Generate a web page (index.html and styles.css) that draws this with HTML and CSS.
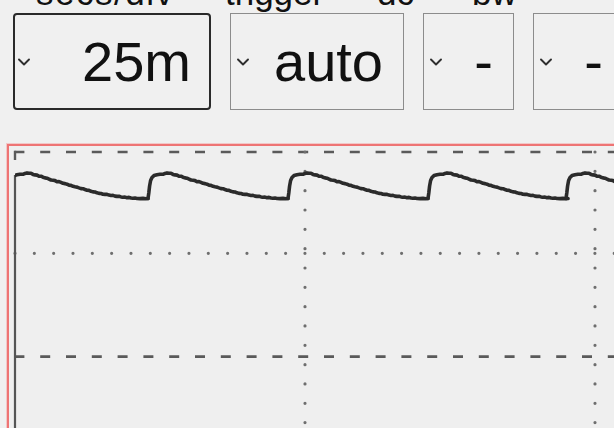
FILE: index.html
```html
<!DOCTYPE html>
<html>
<head>
<meta charset="utf-8">
<link rel="stylesheet" href="styles.css">
</head>
<body>
<div class="labels">
  <span class="lab lab-1">secs/div</span>
  <span class="lab lab-2">trigger</span>
  <span class="lab lab-3">dc</span>
  <span class="lab lab-4">bw</span>
</div>
<div class="controls">
  <div class="sel sel-active w-wide">
    <svg class="chev" width="12" height="8" viewBox="0 0 12 8"><polyline points="1,1.5 6,6.5 11,1.5"/></svg>
    <span class="val">25m</span>
  </div>
  <div class="sel w-mid">
    <svg class="chev" width="12" height="8" viewBox="0 0 12 8"><polyline points="1,1.5 6,6.5 11,1.5"/></svg>
    <span class="val">auto</span>
  </div>
  <div class="sel w-small">
    <svg class="chev" width="12" height="8" viewBox="0 0 12 8"><polyline points="1,1.5 6,6.5 11,1.5"/></svg>
    <span class="val">-</span>
  </div>
  <div class="sel w-small">
    <svg class="chev" width="12" height="8" viewBox="0 0 12 8"><polyline points="1,1.5 6,6.5 11,1.5"/></svg>
    <span class="val">-</span>
  </div>
</div>
<div class="plot">
  <svg class="scope" width="640" height="300" viewBox="9 146 640 300">
    <defs>
      <polyline id="period" points="0,198.5 0.8,193 1.6,186 2.6,180.5 4,177.5 6,175.6 9,174.8 12,174.2 15,174.3 17,173.4 19,172.9 21,173.3 23,173.2 25,174.4 27,174.9 29,175.1 31,176.3 33,176.2 35,177.2 37,177.9 39,178.2 41,179.1 43,180 45,180.2 47,180.6 49,181.8 51,181.6 53,182.4 55,183.3 57,183.6 59,184.2 61,185.2 63,185.4 65,186.3 67,186.8 69,187.1 71,187.9 73,188.6 75,188.7 77,189.5 79,190.2 81,190.4 83,191.3 85,191.9 87,192 89,192.8 91,193.4 93,193.5 95,194.2 97,194.4 99,194.3 101,195.1 103,195.5 105,195.4 107,196.1 109,196.4 111,196.3 113,196.9 115,197.3 117,197.1 119,197.7 121,197.4 123,198 125,198.3 127,198.1 129,198.5 132,198.6 135,198.4 138,198.7 140,198.5"/>
      <clipPath id="grid-clip"><rect x="15" y="140" width="640" height="320"/></clipPath>
    </defs>
    <g class="dash">
      <line x1="14.4" y1="152" x2="650" y2="152"/>
      <line x1="14.4" y1="356.7" x2="650" y2="356.7"/>
    </g>
    <line class="corner" x1="15" y1="150.8" x2="15" y2="160"/>
    <g class="dots">
      <line x1="15" y1="253.3" x2="650" y2="253.3"/>
      <line x1="305" y1="152" x2="305" y2="450"/>
      <line x1="595" y1="152" x2="595" y2="450"/>
    </g>
    <line class="axis" x1="15" y1="175" x2="15" y2="450"/>
    <g class="trace">
      <g clip-path="url(#grid-clip)"><use href="#period" x="8"/></g>
      <use href="#period" x="148"/>
      <use href="#period" x="288"/>
      <use href="#period" x="428"/>
      <use href="#period" x="566"/>
    </g>
  </svg>
</div>
</body>
</html>
```
FILE: styles.css
```css
html, body {
  margin: 0;
  padding: 0;
  overflow: hidden;
  background: #f0f0f0;
  width: 614px;
  height: 428px;
}
body {
  font-family: "Liberation Sans", Arial, sans-serif;
  color: #111;
}
.labels {
  display: flex;
  height: 13px;
  padding-left: 36px;
  overflow: visible;
}
.lab {
  display: block;
  font-size: 35px;
  line-height: 35px;
  margin-top: -25px;
  white-space: nowrap;
}
.lab-1 { width: 189px; letter-spacing: 1.5px; }
.lab-2 { width: 152px; }
.lab-3 { width: 95px; }
.lab-4 { width: 60px; }

.controls {
  display: flex;
  gap: 19px;
  padding-left: 13px;
  height: 97px;
}
.sel {
  box-sizing: border-box;
  height: 97px;
  flex: none;
  display: flex;
  align-items: center;
  justify-content: space-between;
  border: 1px solid #8c8c8c;
  padding: 0 20px 0 6px;
}
.sel-active {
  border: 2px solid #2a2a2a;
  border-radius: 4px;
  padding: 0 18px 0 3px;
}
.w-wide { width: 198px; }
.w-mid { width: 174px; }
.w-small { width: 91px; }

.chev {
  display: block;
  flex: none;
}
.chev polyline {
  fill: none;
  stroke: #2e2e2e;
  stroke-width: 1.9;
  stroke-linecap: round;
  stroke-linejoin: round;
}
.val {
  font-size: 56px;
  line-height: 1.1;
  color: #111;
  white-space: nowrap;
}

.plot {
  margin-top: 34px;
  margin-left: 7px;
  width: 640px;
  height: 300px;
  border: 2px solid #ee7474;
  box-shadow: 0 0 0 1px rgba(244, 150, 150, 0.45);
  background: #efefef;
  overflow: hidden;
}
.scope {
  display: block;
}
.dash line {
  stroke: #5a5a5a;
  stroke-width: 2.7;
  stroke-dasharray: 10 15.8;
}
.corner {
  stroke: #5a5a5a;
  stroke-width: 2.4;
}
.dots line {
  stroke: #6e6e6e;
  stroke-width: 3.2;
  stroke-linecap: round;
  stroke-dasharray: 0 19.33;
}
.axis {
  stroke: #555;
  stroke-width: 2.2;
}
.trace use {
  fill: none;
  stroke: #2b2b2b;
  stroke-width: 3.6;
  stroke-linejoin: round;
  stroke-linecap: round;
}
```
